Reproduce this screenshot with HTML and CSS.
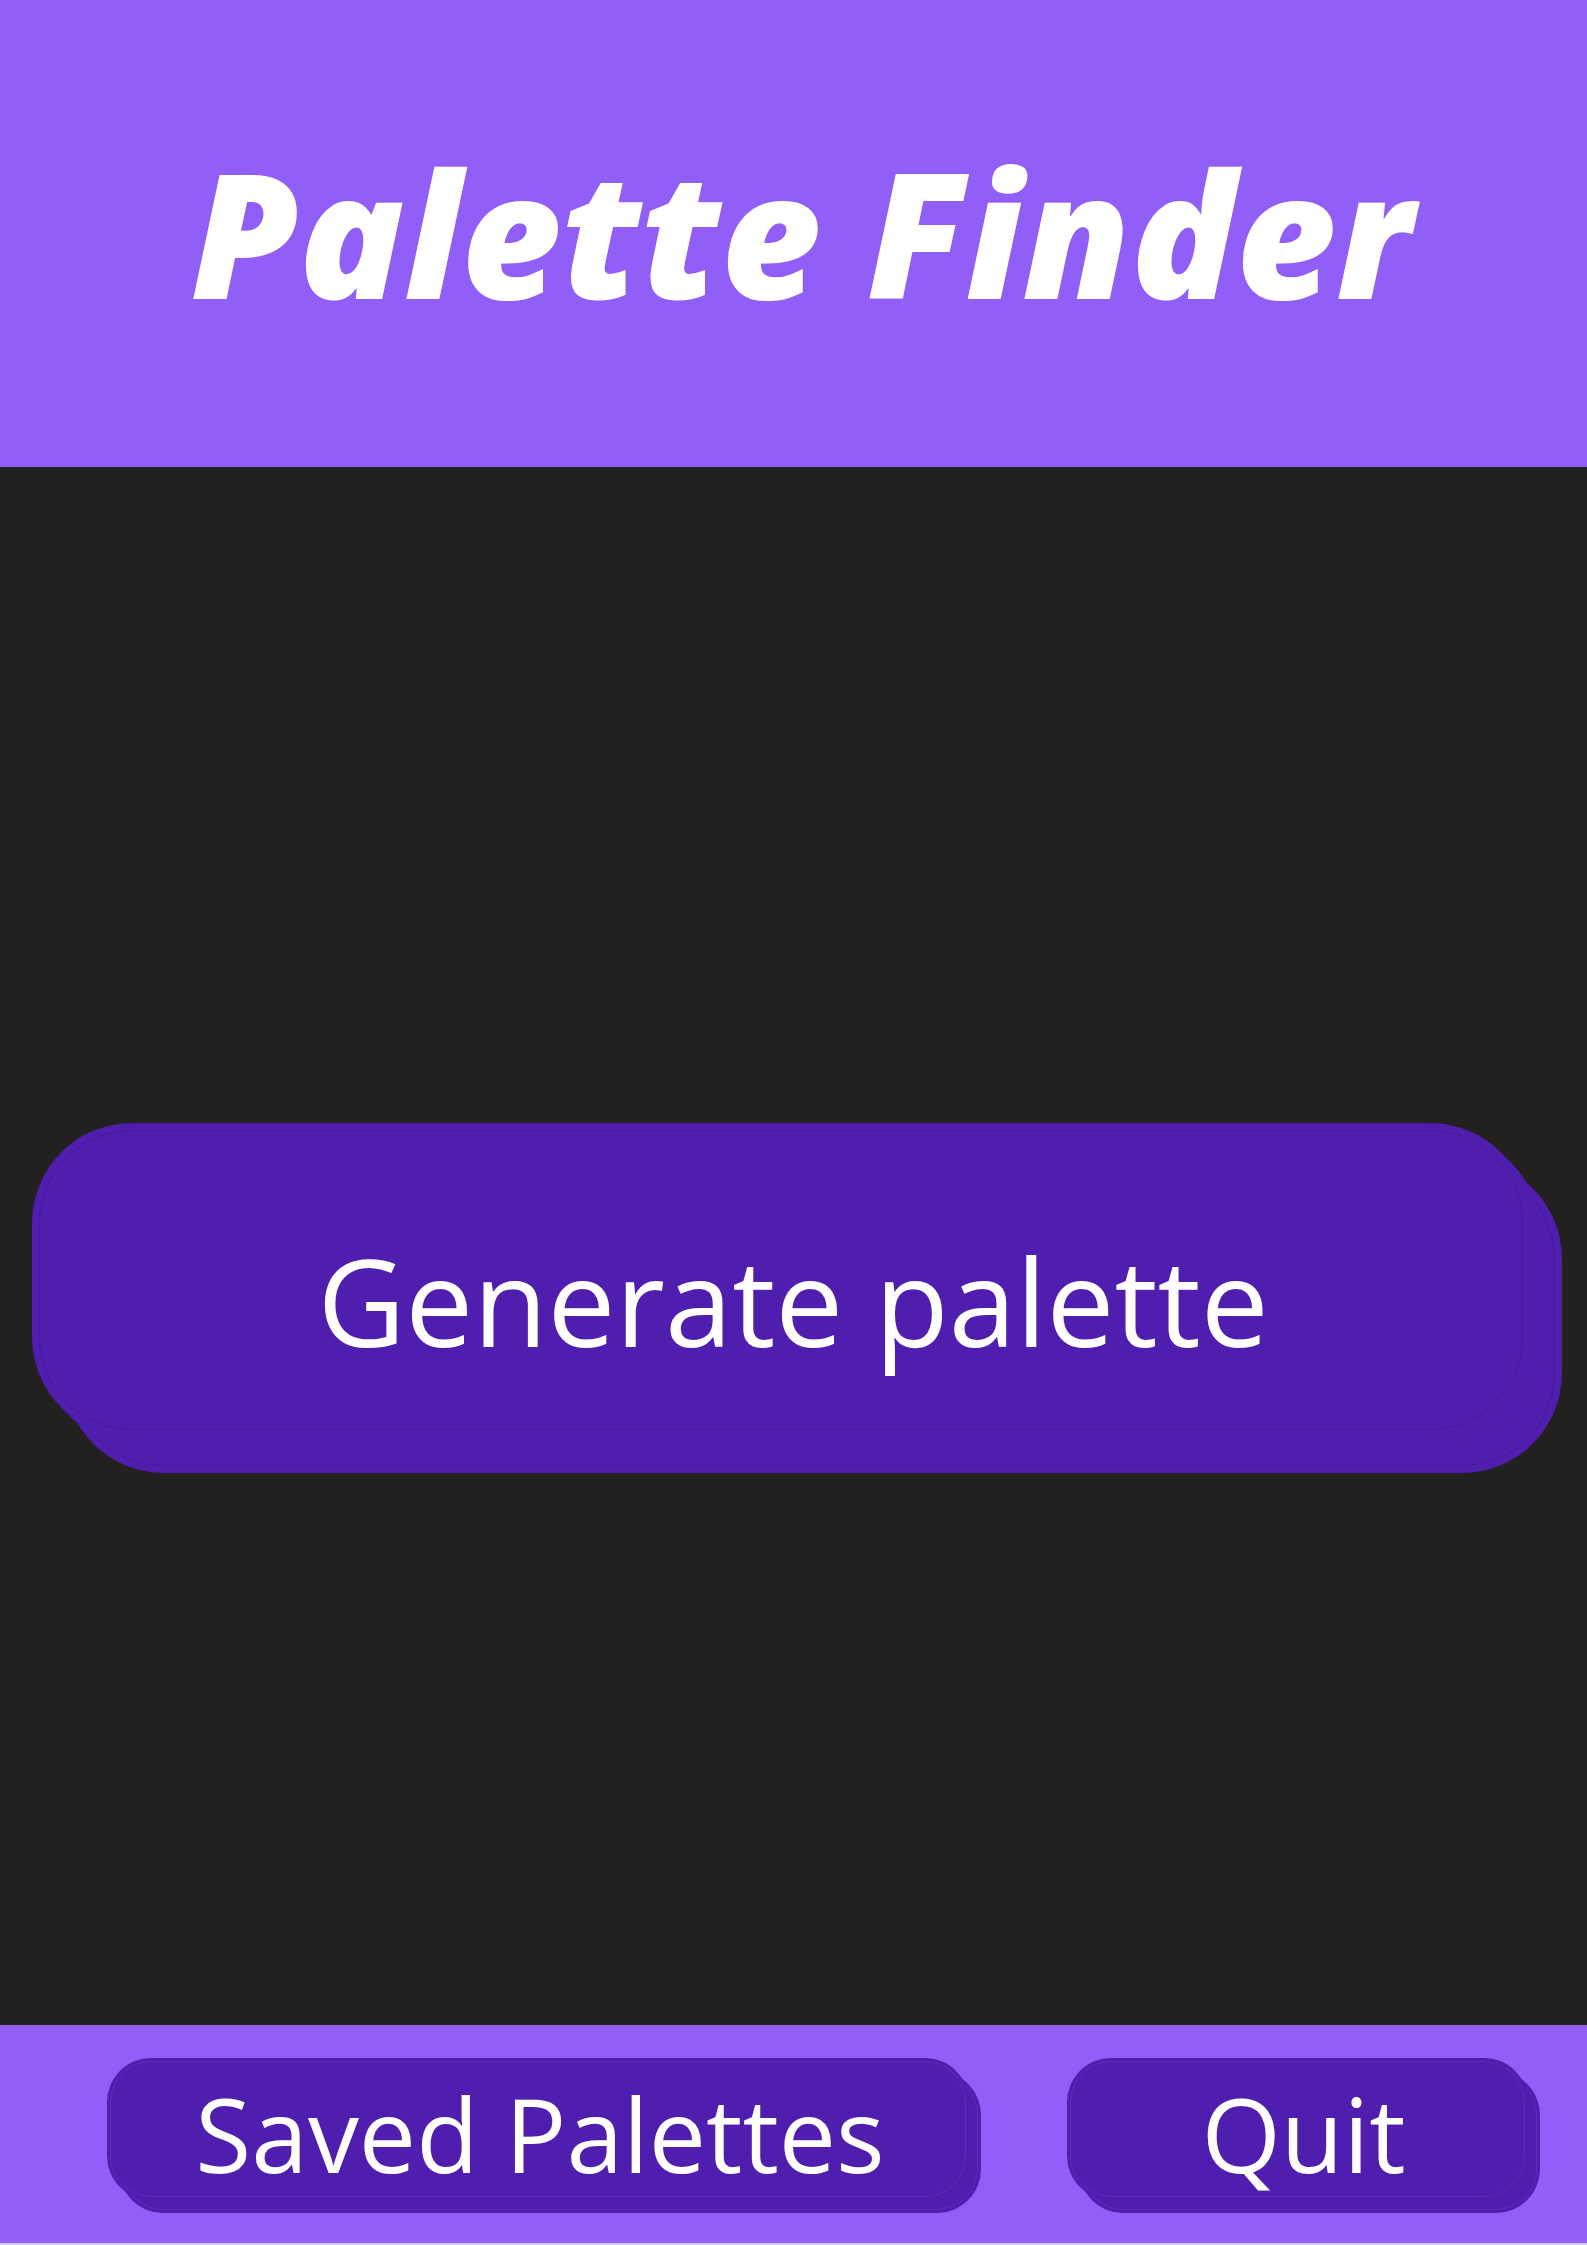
FILE: index.html
```html
<!DOCTYPE html>
<html lang="en">
<head>
<meta charset="utf-8">
<title>Palette Finder</title>
<link rel="stylesheet" href="styles.css">
</head>
<body>
<div class="app">
  <header class="header">
    <h1 class="title">Palette Finder</h1>
  </header>
  <main class="main">
    <button class="gen-btn"><span class="label">Generate palette</span></button>
  </main>
  <footer class="footer">
    <button class="foot-btn saved"><span class="label">Saved Palettes</span></button>
    <button class="foot-btn quit"><span class="label">Quit</span></button>
  </footer>
</div>
</body>
</html>
```

FILE: styles.css
```css
* { box-sizing: border-box; }
html, body { margin: 0; padding: 0; }
body {
  background: #222120;
  font-family: "Open Sans", "Noto Sans", sans-serif;
  color: #fff;
}
.app {
  width: 1587px;
  height: 2245px;
  display: flex;
  flex-direction: column;
}
.header {
  height: 467px;
  background: #925ef8;
  display: flex;
  align-items: center;
  justify-content: center;
}
.title {
  margin: 0;
  font-size: 174px;
  font-weight: 800;
  font-style: italic;
  line-height: 1;
  color: #fff;
  padding-left: 16px;
  padding-bottom: 4px;
}
.main {
  flex: 1;
  padding-top: 656px;
  padding-left: 32px;
}
.gen-btn {
  position: relative;
  width: 1530px;
  height: 350px;
  border: none;
  background: transparent;
  padding: 0;
  font-family: inherit;
  color: #fff;
  display: flex;
  align-items: center;
  justify-content: center;
  z-index: 0;
}
.gen-btn::before,
.gen-btn::after {
  content: "";
  position: absolute;
  width: 1498px;
  height: 314px;
  background: #501eae;
  border-radius: 100px;
  outline: 1px solid #46189b;
  outline-offset: -8px;
}
.gen-btn::before {
  left: 32px;
  top: 36px;
  z-index: -2;
}
.gen-btn::after {
  left: 0;
  top: 0;
  z-index: -1;
  box-shadow: 10px 10px 0 #501eae;
}
.gen-btn .label {
  font-size: 121px;
  line-height: 1;
  padding-right: 8px;
  padding-top: 4px;
}
.footer {
  height: 220px;
  background: #925ef8;
  display: flex;
  align-items: flex-start;
  padding-top: 33px;
  padding-left: 107px;
  gap: 86px;
  border-bottom: 2px solid #d6cbfa;
}
.foot-btn {
  position: relative;
  height: 155px;
  border: none;
  background: transparent;
  padding: 0;
  font-family: inherit;
  color: #fff;
  display: flex;
  align-items: center;
  justify-content: center;
  z-index: 0;
}
.foot-btn::before,
.foot-btn::after {
  content: "";
  position: absolute;
  height: 142px;
  width: calc(100% - 12px);
  background: #501eae;
  border-radius: 44px;
  outline: 1px solid #5a2cbb;
  outline-offset: -4px;
}
.foot-btn::before {
  left: 12px;
  top: 13px;
  z-index: -2;
}
.foot-btn::after {
  left: 0;
  top: 0;
  z-index: -1;
}
.foot-btn.saved { width: 874px; }
.foot-btn.quit { width: 473px; }
.foot-btn .label {
  font-size: 102px;
  line-height: 1;
  padding-bottom: 4px;
}
.foot-btn.saved .label { padding-right: 8px; }
.foot-btn.quit .label { padding-left: 0; }
```
